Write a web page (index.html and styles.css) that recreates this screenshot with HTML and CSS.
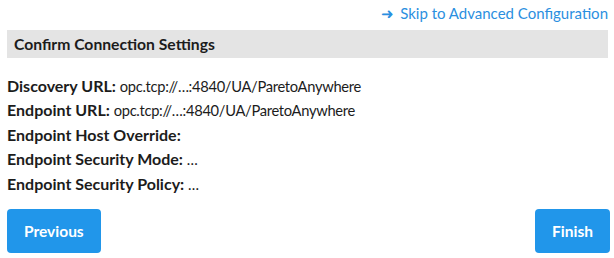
FILE: index.html
```html
<!DOCTYPE html>
<html>
<head>
<meta charset="utf-8">
<link rel="stylesheet" href="styles.css">
</head>
<body>
<div class="page">
  <div class="top">
    <a class="skip" href="#"><span class="arrow">&#10140;</span>Skip to Advanced Configuration</a>
  </div>
  <div class="bar">Confirm Connection Settings</div>
  <div class="rows">
    <div class="row"><b>Discovery URL:</b> <span class="val">opc.tcp://…:4840/UA/ParetoAnywhere</span></div>
    <div class="row"><b>Endpoint URL:</b> <span class="val">opc.tcp://…:4840/UA/ParetoAnywhere</span></div>
    <div class="row"><b>Endpoint Host Override:</b></div>
    <div class="row"><b>Endpoint Security Mode:</b> <span class="val">…</span></div>
    <div class="row"><b>Endpoint Security Policy:</b> <span class="val">…</span></div>
  </div>
  <div class="buttons">
    <button class="btn">Previous</button>
    <button class="btn">Finish</button>
  </div>
</div>
</body>
</html>
```
FILE: styles.css
```css
html, body {
  margin: 0;
  padding: 0;
  background: #fff;
}
.page {
  font-family: Lato, "Liberation Sans", sans-serif;
  font-size: 15px;
  color: #1c1c1c;
  padding: 0 6px 0 7px;
  width: 601px;
}
.top {
  display: flex;
  justify-content: flex-end;
  height: 30px;
  align-items: center;
}
.skip {
  color: #2b8fe0;
  text-decoration: none;
  font-size: 15px;
  display: flex;
  align-items: center;
  margin-bottom: 4px;
}
.arrow {
  font-size: 15px;
  margin-right: 6px;
}
.bar {
  background: #e4e4e4;
  height: 28px;
  line-height: 28px;
  padding-left: 7px;
  font-weight: bold;
  font-size: 15.7px;
}
.rows {
  padding-top: 16px;
}
.row {
  height: 24.4px;
  line-height: 24.4px;
}
.row b {
  font-weight: bold;
  font-size: 16px;
}
.val {
  font-size: 14.7px;
  letter-spacing: -0.3px;
}
.buttons {
  display: flex;
  justify-content: space-between;
  margin-top: 13px;
  margin-right: -2px;
}
.btn {
  background: #2196ea;
  color: #fff;
  border: none;
  border-radius: 4px;
  height: 44px;
  padding: 0 17px;
  font-family: Lato, "Liberation Sans", sans-serif;
  font-size: 15.5px;
  font-weight: bold;
}
```
